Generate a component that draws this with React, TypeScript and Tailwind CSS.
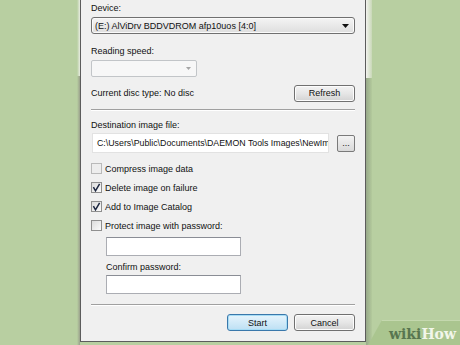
import React from "react";

const Check: React.FC<{ checked?: boolean; dim?: boolean }> = ({ checked, dim }) => (
  <div
    className={`w-[11px] h-[11px] border ${
      dim ? "border-[#b9b9b9] bg-[#ededed]" : "border-[#8f8f8f] bg-gradient-to-br from-[#dcdcdc] to-[#fbfbfb]"
    } flex items-center justify-center`}
  >
    {checked && (
      <svg width="9" height="9" viewBox="0 0 9 9">
        <path d="M1.4 4.2 L3.5 7.8 L7.6 0.8" fill="none" stroke="#1c2640" strokeWidth="1.5" />
      </svg>
    )}
  </div>
);

const Btn: React.FC<{ label: string; primary?: boolean }> = ({ label, primary }) => (
  <div
    className={`w-[61px] h-[17px] rounded-[3px] border flex items-center justify-center ${
      primary
        ? "border-[#3a78ab] bg-gradient-to-b from-[#e6f4fc] to-[#bde0f4] shadow-[inset_0_0_0_1px_#a6dcf5]"
        : "border-[#707070] bg-gradient-to-b from-[#f3f3f3] via-[#e6e6e6] to-[#d3d3d3] shadow-[inset_0_0_0_1px_#fcfcfc]"
    }`}
  >
    {label}
  </div>
);

const Field: React.FC = () => (
  <div className="ml-[15px] w-[135px] h-[19px] border border-[#abadb3] border-t-[#8a8d95] bg-white" />
);

const Row: React.FC<{ label: string; checked?: boolean; dim?: boolean }> = ({ label, checked, dim }) => (
  <div className="h-[19px] flex items-center gap-[3px]">
    <Check checked={checked} dim={dim} />
    <span>{label}</span>
  </div>
);

const Etch: React.FC = () => (
  <div className="h-[2px] border-t border-[#a0a0a0] border-b border-b-white" />
);

export default function App() {
  return (
    <div className="relative w-[460px] h-[345px] overflow-hidden flex bg-[#b8cfa1] font-['Liberation_Sans',Arial,sans-serif] text-[9px] leading-[12px] text-[#111]">
      <div className="w-[80px] h-full flex justify-end">
        <div className="w-[3px] h-full flex flex-col">
          <div className="h-[76px] bg-gradient-to-r from-transparent to-[#e8ece2]" />
          <div className="flex-1 bg-gradient-to-r from-transparent to-[#9aa08c]" />
        </div>
      </div>

      <div className="w-[286px] h-[342px] border-x border-b border-[#5c5c5c] bg-[#f0f0f0] px-[10px] flex flex-col">
        <div className="mt-[2px] h-[12px]">Device:</div>
        <div className="mt-[3px] h-[17px] rounded-[3px] border border-[#707070] bg-gradient-to-b from-[#f4f4f4] to-[#dedede] shadow-[inset_0_0_0_1px_#fafafa] flex items-center pl-[3px] pr-[5px]">
          <span className="flex-1">(E:) AlViDrv BDDVDROM afp10uos [4:0]</span>
          <svg width="7" height="4" viewBox="0 0 7 4">
            <path d="M0 0 H7 L3.5 4 Z" fill="#111" />
          </svg>
        </div>

        <div className="mt-[11px] h-[12px]">Reading speed:</div>
        <div className="mt-[3px] w-[106px] h-[17px] rounded-[2px] border border-[#c2c5c8] bg-[#f7f7f7] flex items-center justify-end pr-[5px]">
          <svg width="5" height="3" viewBox="0 0 5 3">
            <path d="M0 0 H5 L2.5 3 Z" fill="#a5a5a5" />
          </svg>
        </div>

        <div className="mt-[8px] h-[16px] flex items-center justify-between">
          <span>Current disc type: No disc</span>
          <Btn label="Refresh" />
        </div>

        <div className="mt-[8px]">
          <Etch />
        </div>

        <div className="mt-[8px] h-[12px]">Destination image file:</div>
        <div className="mt-[2px] h-[20px] flex items-center gap-[8px]">
          <div className="ml-px w-[237px] h-[20px] border border-[#e2e2e2] bg-white flex items-center pl-[4px] overflow-hidden whitespace-nowrap">
            <span className="text-[8.8px]">C:\Users\Public\Documents\DAEMON Tools Images\NewIm</span>
          </div>
          <div className="w-[18px] h-[17px] rounded-[2px] border border-[#7a7a7a] bg-gradient-to-b from-[#f3f3f3] to-[#d9d9d9] flex items-center justify-center leading-[8px]">
            ...
          </div>
        </div>

        <div className="mt-[6px] flex flex-col">
          <Row label="Compress image data" dim />
          <Row label="Delete image on failure" checked />
          <Row label="Add to Image Catalog" checked />
          <Row label="Protect image with password:" />
        </div>

        <div className="mt-[2px]">
          <Field />
        </div>
        <div className="mt-[5px] ml-[15px] h-[12px]">Confirm password:</div>
        <div className="mt-[2px]">
          <Field />
        </div>

        <div className="mt-[10px]">
          <Etch />
        </div>

        <div className="mt-[8px] flex justify-end gap-[6px]">
          <Btn label="Start" primary />
          <Btn label="Cancel" />
        </div>
      </div>

      <div className="w-[6px] h-full flex flex-col">
        <div className="h-[78px] bg-gradient-to-r from-[#f2f2ee] to-[#c9d8b8]" />
        <div className="flex-1 bg-gradient-to-r from-[#98a98a] to-[#b3ca9c]" />
      </div>

      <div className="absolute right-0 bottom-0 w-[92px] h-[25px] bg-[#aac58f] [clip-path:polygon(14px_0,100%_0,100%_100%,0_100%)] border-t border-[#c4d8ae] flex items-center justify-end pr-[4px] pt-[2px]">
        <span className="font-['DejaVu_Serif',serif] font-bold text-[14px] leading-none">
          <span className="text-[#587650]">wiki</span>
          <span className="text-[#f2f6ea]">How</span>
        </span>
      </div>
    </div>
  );
}
